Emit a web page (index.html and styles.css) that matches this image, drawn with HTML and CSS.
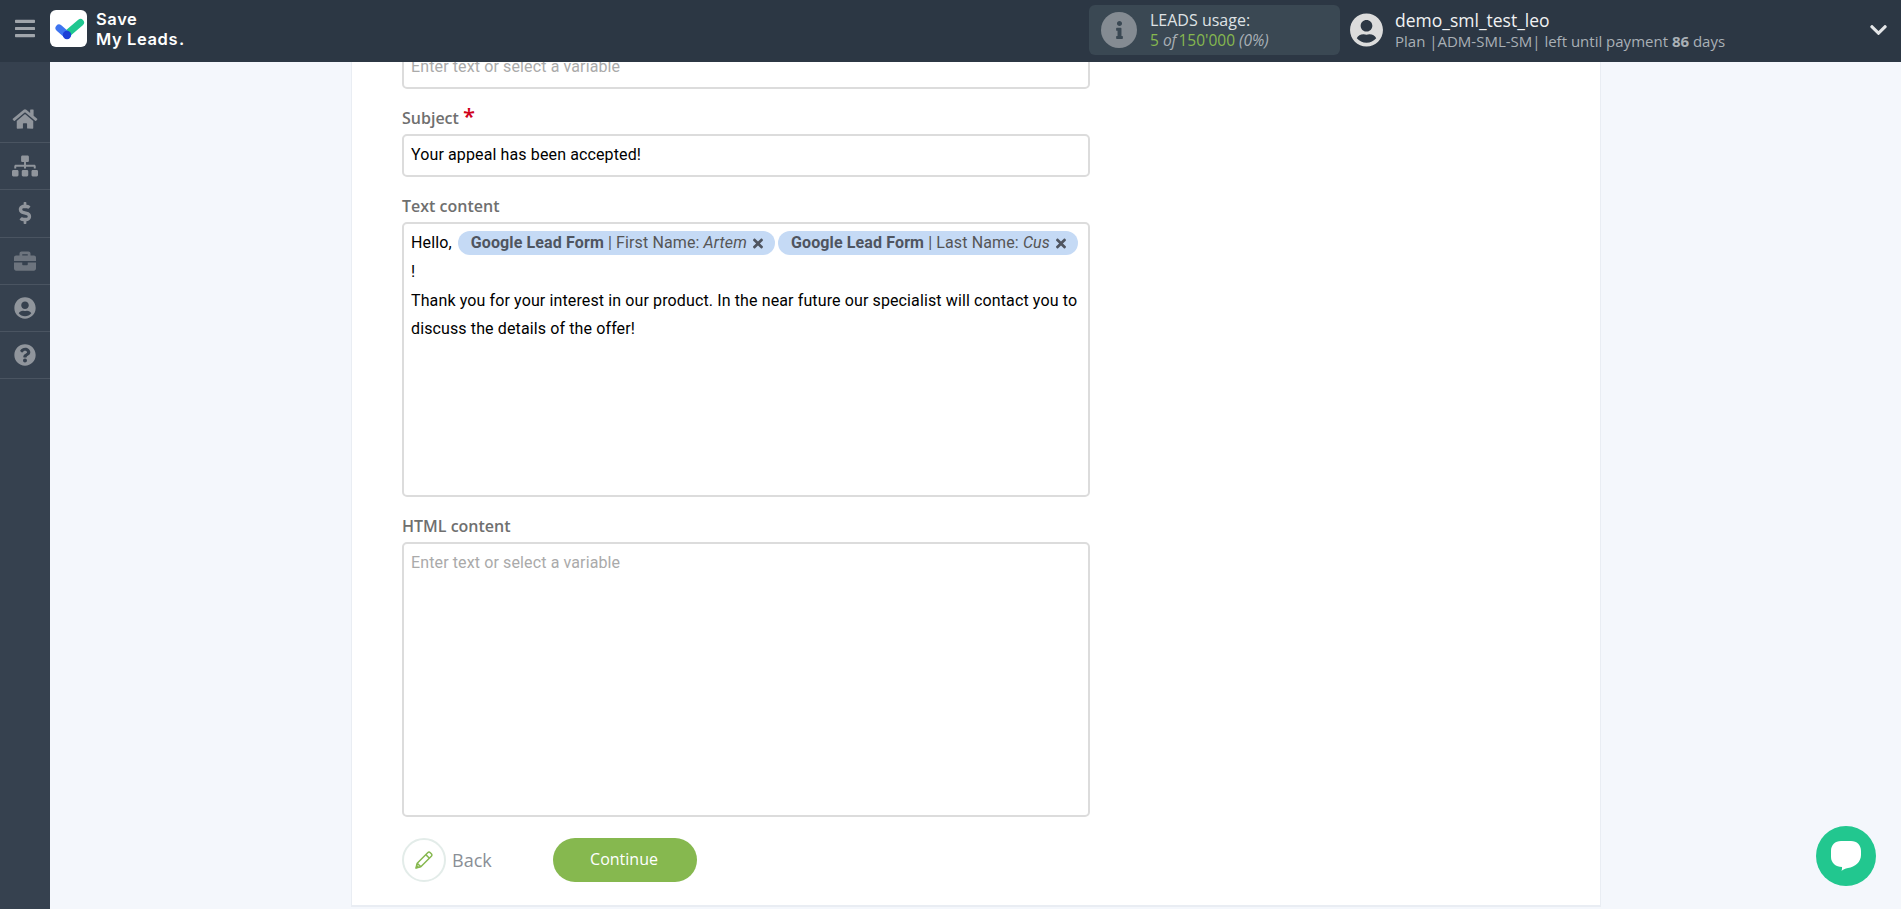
FILE: index.html
```html
<!DOCTYPE html>
<html lang="en">
<head>
    <meta charset="UTF-8">
    <meta name="viewport" content="width=device-width, initial-scale=1.0">
    <title>Save My Leads</title>
    <link rel="stylesheet" href="styles.css">
</head>
<body>
    <header class="topbar">
        <div class="topbar-left">
            <button class="menu-btn" type="button" aria-label="Menu">
                <svg viewBox="0 0 448 512"><path d="M16 132h416c8.837 0 16-7.163 16-16V76c0-8.837-7.163-16-16-16H16C7.163 60 0 67.163 0 76v40c0 8.837 7.163 16 16 16zm0 160h416c8.837 0 16-7.163 16-16v-40c0-8.837-7.163-16-16-16H16c-8.837 0-16 7.163-16 16v40c0 8.837 7.163 16 16 16zm0 160h416c8.837 0 16-7.163 16-16v-40c0-8.837-7.163-16-16-16H16c-8.837 0-16 7.163-16 16v40c0 8.837 7.163 16 16 16z"/></svg>
            </button>
            <div class="logo-mark">
                <svg viewBox="0 0 37 37">
                    <path class="tick-green" d="M17 24L30.500 12.500"/>
                    <path class="tick-blue" d="M9 18L17 25"/>
                    <circle class="tick-dot" cx="17" cy="25" r="4.200"/>
                </svg>
            </div>
            <div class="logo-text">Save<br>My Leads<span class="logo-dot">.</span></div>
        </div>
        <div class="usage">
            <div class="usage-icon">
                <svg viewBox="0 0 192 512"><path d="M20 424.229h20V279.771H20c-11.046 0-20-8.954-20-20V212c0-11.046 8.954-20 20-20h112c11.046 0 20 8.954 20 20v212.229h20c11.046 0 20 8.954 20 20V492c0 11.046-8.954 20-20 20H20c-11.046 0-20-8.954-20-20v-47.771c0-11.046 8.954-20 20-20zM96 0C56.235 0 24 32.235 24 72s32.235 72 72 72 72-32.235 72-72S135.764 0 96 0z"/></svg>
            </div>
            <div class="usage-text">
                <div class="usage-title">LEADS usage:</div>
                <div class="usage-count">5 <em class="usage-of">of</em> 150'000 <em class="usage-pct">(0%)</em></div>
            </div>
        </div>
        <div class="account">
            <svg class="account-avatar" viewBox="0 0 496 512"><path d="M248 8C111 8 0 119 0 256s111 248 248 248 248-111 248-248S385 8 248 8zm0 96c48.6 0 88 39.4 88 88s-39.4 88-88 88-88-39.4-88-88 39.4-88 88-88zm0 344c-58.7 0-111.3-26.6-146.5-68.2 18.8-35.4 55.6-59.8 98.5-59.8 2.4 0 4.8.4 7.1 1.1 13 4.2 26.6 6.9 40.9 6.9 14.3 0 28-2.7 40.9-6.9 2.3-.7 4.7-1.1 7.1-1.1 42.9 0 79.7 24.4 98.5 59.8C359.3 421.4 306.7 448 248 448z"/></svg>
            <div class="account-text">
                <div class="account-name">demo_sml_test_leo</div>
                <div class="account-plan">Plan |ADM-SML-SM| left until payment <b>86</b> days</div>
            </div>
        </div>
        <svg class="account-chevron" viewBox="0 0 448 512"><path d="M207.029 381.476L12.686 187.132c-9.373-9.373-9.373-24.569 0-33.941l22.667-22.667c9.357-9.357 24.522-9.375 33.901-.04L224 284.505l154.745-154.021c9.379-9.335 24.544-9.317 33.901.04l22.667 22.667c9.373 9.373 9.373 24.569 0 33.941L240.971 381.476c-9.373 9.372-24.569 9.372-33.942 0z"/></svg>
    </header>

    <div class="layout">
        <nav class="sidebar">
            <a class="side-item"><svg viewBox="0 0 576 512"><path d="M280.37 148.26L96 300.11V464a16 16 0 0 0 16 16l112.06-.29a16 16 0 0 0 15.92-16V368a16 16 0 0 1 16-16h64a16 16 0 0 1 16 16v95.64a16 16 0 0 0 16 16.05L464 480a16 16 0 0 0 16-16V300L295.67 148.26a12.19 12.19 0 0 0-15.3 0zM571.6 251.47L488 182.56V44.05a12 12 0 0 0-12-12h-56a12 12 0 0 0-12 12v72.61L318.47 43a48 48 0 0 0-61 0L4.34 251.47a12 12 0 0 0-1.6 16.9l25.5 31A12 12 0 0 0 45.15 301l235.22-193.74a12.19 12.19 0 0 1 15.3 0L530.9 301a12 12 0 0 0 16.9-1.6l25.5-31a12 12 0 0 0-1.7-16.93z"/></svg></a>
            <a class="side-item"><svg viewBox="0 0 640 512"><path d="M128 352H32c-17.67 0-32 14.33-32 32v96c0 17.67 14.33 32 32 32h96c17.67 0 32-14.33 32-32v-96c0-17.67-14.33-32-32-32zm-24-80h192v48h48v-48h192v48h48v-57.59c0-21.17-17.23-38.41-38.41-38.41H344v-64h40c17.67 0 32-14.33 32-32V32c0-17.67-14.33-32-32-32H256c-17.67 0-32 14.33-32 32v96c0 17.67 14.33 32 32 32h40v64H94.41C73.23 224 56 241.23 56 262.41V320h48v-48zm264 80h-96c-17.67 0-32 14.33-32 32v96c0 17.67 14.33 32 32 32h96c17.67 0 32-14.33 32-32v-96c0-17.67-14.33-32-32-32zm240 0h-96c-17.67 0-32 14.33-32 32v96c0 17.67 14.33 32 32 32h96c17.67 0 32-14.33 32-32v-96c0-17.67-14.33-32-32-32z"/></svg></a>
            <a class="side-item"><svg viewBox="0 0 288 512"><path d="M209.2 233.4l-108-31.6C88.7 198.2 80 186.5 80 173.5c0-16.3 13.2-29.5 29.5-29.5h66.3c12.2 0 24.2 3.7 34.2 10.5 6.1 4.1 14.3 3.1 19.5-2l34.8-34c7.1-6.9 6.1-18.4-1.8-24.5C238 74.8 207.4 64.1 176 64V16c0-8.8-7.2-16-16-16h-32c-8.8 0-16 7.2-16 16v48h-2.5C45.8 64-5.4 118.7.5 183.6c4.2 46.1 39.4 83.6 83.8 96.6l102.5 30c12.5 3.7 21.2 15.3 21.2 28.3 0 16.3-13.2 29.5-29.5 29.5h-66.3C100 368 88 364.3 78 357.5c-6.1-4.1-14.3-3.1-19.5 2l-34.8 34c-7.1 6.9-6.1 18.4 1.8 24.5 24.5 19.2 55.1 29.9 86.5 30v48c0 8.8 7.2 16 16 16h32c8.8 0 16-7.2 16-16v-48.2c46.6-.9 90.3-28.6 105.7-72.7 21.5-61.6-14.6-124.8-72.5-141.7z"/></svg></a>
            <a class="side-item side-dim"><svg viewBox="0 0 512 512"><path d="M320 336c0 8.84-7.16 16-16 16h-96c-8.84 0-16-7.16-16-16v-48H0v144c0 25.6 22.4 48 48 48h416c25.6 0 48-22.4 48-48V288H320v48zm144-208h-80V80c0-25.6-22.4-48-48-48H176c-25.6 0-48 22.4-48 48v48H48c-25.6 0-48 22.4-48 48v80h512v-80c0-25.6-22.4-48-48-48zm-144 0H192V96h128v32z"/></svg></a>
            <a class="side-item"><svg viewBox="0 0 496 512"><path d="M248 8C111 8 0 119 0 256s111 248 248 248 248-111 248-248S385 8 248 8zm0 96c48.6 0 88 39.4 88 88s-39.4 88-88 88-88-39.4-88-88 39.4-88 88-88zm0 344c-58.7 0-111.3-26.6-146.5-68.2 18.8-35.4 55.6-59.8 98.5-59.8 2.4 0 4.8.4 7.1 1.1 13 4.2 26.6 6.9 40.9 6.9 14.3 0 28-2.7 40.9-6.9 2.3-.7 4.7-1.1 7.1-1.1 42.9 0 79.7 24.4 98.5 59.8C359.3 421.4 306.7 448 248 448z"/></svg></a>
            <a class="side-item"><svg viewBox="0 0 512 512"><path d="M504 256c0 136.997-111.043 248-248 248S8 392.997 8 256C8 119.083 119.043 8 256 8s248 111.083 248 248zM262.655 90c-54.497 0-89.255 22.957-116.549 63.758-3.536 5.286-2.353 12.415 2.715 16.258l34.699 26.31c5.205 3.947 12.621 3.008 16.665-2.122 17.864-22.658 30.113-35.797 57.303-35.797 20.429 0 45.698 13.148 45.698 32.958 0 14.976-12.363 22.667-32.534 33.976C247.128 238.528 216 254.941 216 296v4c0 6.627 5.373 12 12 12h56c6.627 0 12-5.373 12-12v-1.333c0-28.462 83.186-29.647 83.186-106.667 0-58.002-60.165-102-116.531-102zM256 338c-25.365 0-46 20.635-46 46 0 25.364 20.635 46 46 46s46-20.636 46-46c0-25.365-20.635-46-46-46z"/></svg></a>
        </nav>

        <main class="main">
            <section class="card">
                <div class="box box-first"><span class="placeholder">Enter text or select a variable</span></div>

                <label class="field-label">Subject <span class="required">*</span></label>
                <div class="box box-single">Your appeal has been accepted!</div>

                <label class="field-label">Text content</label>
                <div class="box box-text">
                    Hello, <span class="chip"><b>Google Lead Form</b> | First Name: <i>Artem</i><svg class="chip-x" viewBox="0 0 352 512"><path d="M242.72 256l100.07-100.07c12.28-12.28 12.28-32.19 0-44.48l-22.24-22.24c-12.28-12.28-32.19-12.28-44.48 0L176 189.28 75.93 89.21c-12.28-12.28-32.19-12.28-44.48 0L9.21 111.45c-12.28 12.28-12.28 32.19 0 44.48L109.28 256 9.21 356.07c-12.28 12.28-12.28 32.19 0 44.48l22.24 22.24c12.28 12.28 32.2 12.28 44.48 0L176 322.72l100.07 100.07c12.28 12.28 32.2 12.28 44.48 0l22.24-22.24c12.28-12.28 12.28-32.19 0-44.48L242.72 256z"/></svg></span>
                    <span class="chip"><b>Google Lead Form</b> | Last Name: <i>Cus</i><svg class="chip-x" viewBox="0 0 352 512"><path d="M242.72 256l100.07-100.07c12.28-12.28 12.28-32.19 0-44.48l-22.24-22.24c-12.28-12.28-32.19-12.28-44.48 0L176 189.28 75.93 89.21c-12.28-12.28-32.19-12.28-44.48 0L9.21 111.45c-12.28 12.28-12.28 32.19 0 44.48L109.28 256 9.21 356.07c-12.28 12.28-12.28 32.19 0 44.48l22.24 22.24c12.28 12.28 32.2 12.28 44.48 0L176 322.72l100.07 100.07c12.28 12.28 32.2 12.28 44.48 0l22.24-22.24c12.28-12.28 12.28-32.19 0-44.48L242.72 256z"/></svg></span><br>
                    !<br>
                    Thank you for your interest in our product. In the near future our specialist will contact you to discuss the details of the offer!
                </div>

                <label class="field-label">HTML content</label>
                <div class="box box-text"><span class="placeholder">Enter text or select a variable</span></div>

                <div class="actions">
                    <a class="back-link">
                        <span class="back-circle">
                            <svg viewBox="0 0 18 18"><path class="pencil" d="M1 17L2.200 12.200L12.700 1.700C13.500 .9 14.500 .9 15.300 1.700L16.300 2.700C17.100 3.500 17.100 4.500 16.300 5.300L5.800 15.800ZM10.800 3.600L14.400 7.200M2.200 12.200L5.800 15.800"/><path class="pencil-tip" d="M.6 17.400L1.500 13.400L4.600 16.500Z"/></svg>
                        </span>
                        Back
                    </a>
                    <button class="continue-btn" type="button">Continue</button>
                </div>
            </section>
        </main>
    </div>

    <div class="chat-btn">
        <svg viewBox="0 0 30 30"><path d="M10 0h10c6 0 10 4 10 10v4c0 7-6 12-13 13-3 .6-5 1.500-6.500 3 .3-1 .7-2.500.5-4C5 26 0 22 0 16V10C0 4 4 0 10 0z"/></svg>
    </div>
</body>
</html>
```

FILE: styles.css
```css
* {
    box-sizing: border-box;
}
html, body {
    height: 100%;
}
body {
    margin: 0;
    display: flex;
    flex-direction: column;
    height: 909px;
    overflow: hidden;
    background-color: #f4f7fc;
    font-family: Roboto, sans-serif;
    font-size: 16px;
    color: #000;
}

/* top bar */
.topbar {
    flex: 0 0 62px;
    display: flex;
    align-items: center;
    padding-bottom: 2px;
    background-color: #2c3744;
    color: #fff;
}
.topbar-left {
    flex: 0 0 1089px;
    display: flex;
    align-items: center;
    padding-bottom: 3px;
}
.menu-btn {
    width: 50px;
    height: 40px;
    padding: 0 15px;
    border: none;
    background: none;
}
.menu-btn svg {
    display: block;
    width: 20px;
    height: 23px;
    fill: #a0a5ab;
}
.logo-mark {
    width: 37px;
    height: 37px;
    background-color: #fff;
    border-radius: 6px;
}
.logo-mark svg {
    display: block;
    width: 37px;
    height: 37px;
    fill: none;
    stroke-linecap: round;
    stroke-width: 7px;
}
.tick-green {
    stroke: #20c790;
}
.tick-blue {
    stroke: #3e74f0;
}
.tick-dot {
    fill: #1c3fd6;
}
.logo-text {
    margin-left: 9px;
    font-family: Inter, sans-serif;
    font-size: 16.500px;
    font-weight: 600;
    line-height: 20px;
    letter-spacing: 0.6px;
}
.logo-dot {
    margin-left: 1px;
}

.usage {
    width: 251px;
    height: 50px;
    display: flex;
    align-items: center;
    padding-left: 12px;
    background-color: #3a4853;
    border-radius: 6px;
}
.usage-icon {
    width: 36px;
    height: 36px;
    display: flex;
    align-items: center;
    justify-content: center;
    background-color: #848b92;
    border-radius: 50%;
}
.usage-icon svg {
    width: 11px;
    height: 18px;
    fill: #3a4853;
}
.usage-text {
    margin-left: 13px;
    font-family: "Open Sans", sans-serif;
    font-size: 16px;
    line-height: 20px;
}
.usage-title {
    color: #dfe2e5;
}
.usage-count {
    font-size: 15.500px;
    color: #86b84f;
}
.usage-of {
    margin-right: -2px;
    color: #a9b0b6;
}
.usage-pct {
    color: #a9b0b6;
}

.account {
    flex: 1;
    display: flex;
    align-items: center;
    margin-left: 10px;
}
.account-avatar {
    width: 33px;
    height: 34px;
    fill: #dcdcdc;
}
.account-text {
    margin-left: 12px;
}
.account-name {
    font-family: "Open Sans", sans-serif;
    font-size: 17.500px;
    line-height: 22px;
    color: #f1f2f3;
}
.account-plan {
    padding-top: 1px;
    font-family: "Open Sans", sans-serif;
    font-size: 15px;
    line-height: 19px;
    color: #a9b0b6;
}
.account-chevron {
    width: 17px;
    height: 20px;
    margin-right: 14px;
    fill: #e4e6e8;
}

/* sidebar + page */
.layout {
    flex: 1;
    display: flex;
    min-height: 0;
}
.sidebar {
    flex: 0 0 50px;
    padding-top: 33.750px;
    background-color: #36414f;
}
.side-item {
    display: flex;
    align-items: center;
    justify-content: center;
    height: 47.250px;
    border-bottom: 1px solid #4a5461;
}
.side-item svg {
    height: 22px;
    width: 26px;
    fill: #90959c;
}
.side-dim svg {
    fill: #6d747e;
}

.main {
    flex: 1;
    min-width: 0;
    overflow: hidden;
    padding-left: 301px;
}
.card {
    width: 1250px;
    height: 860px;
    margin-top: -15px;
    padding: 0 0 0 50px;
    background-color: #fff;
    border: 1px solid #e9edf3;
    border-top: none;
    border-bottom-width: 2px;
}

/* form */
.box {
    width: 688px;
    padding: 5px 7px 0;
    border: 2px solid #dcdcdc;
    border-radius: 5px;
    background-color: #fff;
    line-height: 28.800px;
    letter-spacing: 0.12px;
}
.box-first {
    height: 42px;
    padding-top: 4px;
}
.box-single {
    height: 43px;
}
.box-text {
    height: 275px;
}
.placeholder {
    color: #aaa;
}
.field-label {
    display: block;
    margin-top: 18px;
    margin-bottom: 5px;
    font-family: "Open Sans", sans-serif;
    font-size: 16px;
    font-weight: 600;
    line-height: 22px;
    color: #6f6f6f;
}
.required {
    font-size: 22px;
    line-height: 16px;
    color: #d0021b;
}
.chip {
    display: inline-block;
    height: 24px;
    margin-top: 2px;
    margin-left: 2px;
    padding: 0 12px 0 13px;
    border-radius: 12px;
    background-color: #c5daf5;
    line-height: 24px;
    color: #555;
    vertical-align: top;
}
.chip + .chip {
    margin-left: -1px;
}
.chip b {
    color: #4f5560;
}
.chip-x {
    width: 10px;
    height: 15px;
    margin-left: 6px;
    vertical-align: -3px;
    fill: #4f5560;
}

.actions {
    display: flex;
    align-items: center;
    margin-top: 21px;
}
.back-link {
    display: flex;
    align-items: center;
    width: 151px;
    font-family: "Open Sans", sans-serif;
    font-size: 18px;
    color: #8a8f96;
}
.back-circle {
    width: 44px;
    height: 44px;
    margin-right: 6px;
    display: flex;
    align-items: center;
    justify-content: center;
    border: 2px solid #e3ece9;
    border-radius: 50%;
}
.back-circle svg {
    width: 18px;
    height: 18px;
}
.pencil {
    fill: none;
    stroke: #86b84f;
    stroke-width: 1.500px;
    stroke-linejoin: round;
}
.pencil-tip {
    fill: #86b84f;
}
.continue-btn {
    width: 144px;
    height: 44px;
    padding: 0 2px 2px 0;
    border: none;
    border-radius: 22px;
    background-color: #86b84f;
    font-family: "Open Sans", sans-serif;
    font-size: 16px;
    color: #fff;
}

/* floating chat button */
.chat-btn {
    position: absolute;
    left: 1816px;
    top: 826px;
    width: 60px;
    height: 60px;
    display: flex;
    align-items: center;
    justify-content: center;
    border-radius: 50%;
    background-color: #22c78f;
}
.chat-btn svg {
    width: 30px;
    height: 30px;
    fill: #fff;
}
```
